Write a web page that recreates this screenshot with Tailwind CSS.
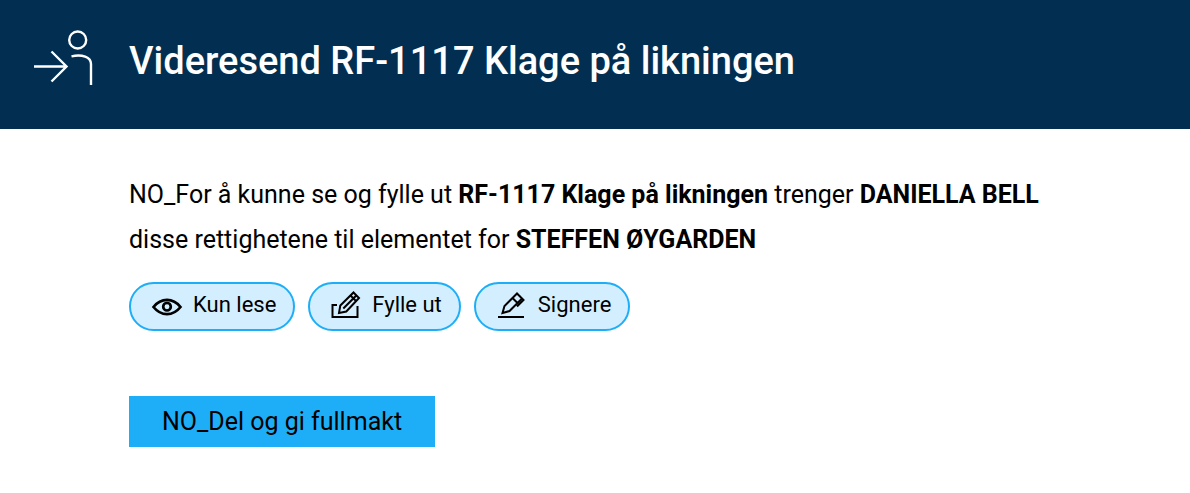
<!DOCTYPE html>
<html lang="no">
<head>
<meta charset="utf-8">
<meta name="viewport" content="width=device-width, initial-scale=1">
<title>Videresend RF-1117 Klage på likningen</title>
<script src="https://cdn.jsdelivr.net/npm/@tailwindcss/browser@4"></script>
</head>
<body class="bg-white font-['Roboto',sans-serif] text-black">
  <header class="flex items-start bg-[#022f51] pt-7 pb-[41px] pl-[33px] text-white">
    <svg class="mr-9 h-15 w-15 shrink-0" viewBox="0 0 60 60" fill="none" stroke="currentColor" stroke-width="2.4" aria-hidden="true">
      <path d="M1 38.500H34M18.500 23.500 33.500 38.500 18.500 53.500"/>
      <circle cx="44.700" cy="12" r="8.500"/>
      <path d="M38.500 28.300C49 26 58 29 58 36V57"/>
    </svg>
    <h1 class="mt-2 text-[38px] leading-[50px] font-medium">Videresend RF-1117 Klage på likningen</h1>
  </header>
  <main class="px-[129px] pt-[43px] pb-11">
    <p class="max-w-[932px] text-[25px] leading-[45px]">NO_For å kunne se og fylle ut <strong>RF-1117 Klage på likningen</strong> trenger <strong>DANIELLA BELL</strong> disse rettighetene til elementet for <strong>STEFFEN ØYGARDEN</strong></p>
    <ul class="mt-5 flex flex-wrap gap-[13px] text-[22px]">
      <li class="flex h-[49px] items-center gap-2.5 rounded-full border-2 border-[#1eaef7] bg-[#d3efff] pr-[17px] pb-1 pl-5">
        <svg class="mt-1 h-8 w-8 shrink-0" viewBox="0 0 32 32" fill="none" stroke="currentColor" stroke-width="2.700" aria-hidden="true">
          <path d="M2.500 16C10 6.500 22 6.500 29.500 16 22 25.500 10 25.500 2.500 16Z"/><circle cx="16" cy="15.700" r="3.800"/>
        </svg>Kun lese
      </li>
      <li class="flex h-[49px] items-center gap-2.5 rounded-full border-2 border-[#1eaef7] bg-[#d3efff] pr-[17px] pb-1 pl-5">
        <svg class="mt-1 h-8 w-8 shrink-0" viewBox="0 0 32 32" fill="none" stroke="currentColor" stroke-width="2" aria-hidden="true">
          <path d="M7 14H2.500V26H27.500V15"/>
          <path d="M9 22 10.300 14.500 23.500 1.500 29 7 16.300 20.500ZM13.300 17.500 25.800 5M20.500 4.500 26 10"/>
        </svg>Fylle ut
      </li>
      <li class="flex h-[49px] items-center gap-2.5 rounded-full border-2 border-[#1eaef7] bg-[#d3efff] pr-[17px] pb-1 pl-5">
        <svg class="mt-1 h-8 w-8 shrink-0" viewBox="0 0 32 32" fill="none" stroke="currentColor" stroke-width="2" aria-hidden="true">
          <path d="M2 26H28"/>
          <path d="M6.500 22 8.500 15 21 2.500 26 7.500 13.500 20ZM16.500 7 21.500 12M24 5.500 27.500 9 21 15.500"/>
        </svg>Signere
      </li>
    </ul>
    <button type="button" class="mt-[65px] h-[51px] bg-[#1eaef7] px-[33px] text-[25px]">NO_Del og gi fullmakt</button>
  </main>
</body>
</html>
